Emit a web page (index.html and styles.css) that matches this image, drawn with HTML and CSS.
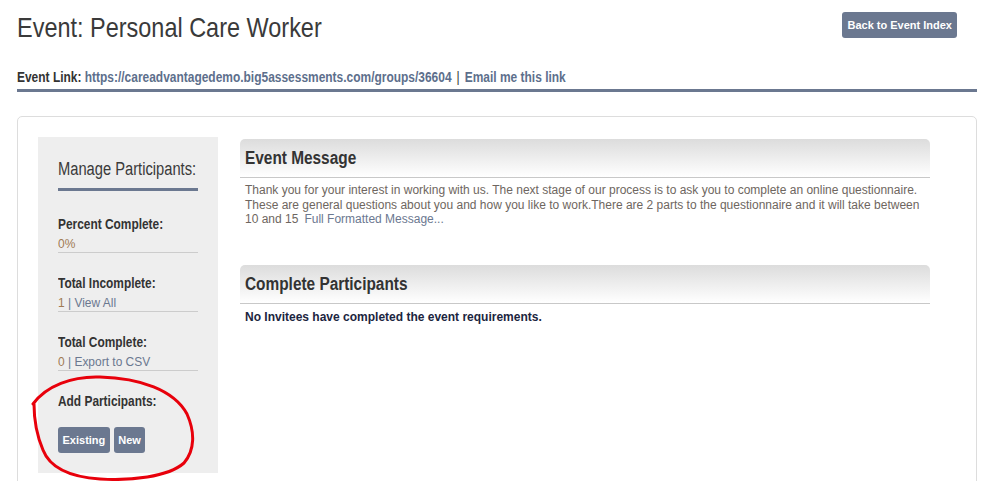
FILE: index.html
```html
<!DOCTYPE html>
<html>
<head>
<meta charset="utf-8">
<title>Event: Personal Care Worker</title>
<link rel="stylesheet" href="styles.css">
</head>
<body>
<div class="page">
  <header class="top">
    <h1 class="title"><span class="cond c-title">Event: Personal Care Worker</span></h1>
    <a class="btn btn-back" href="#">Back to Event Index</a>
  </header>
  <div class="event-link">
    <span class="cond c-link"><span class="label">Event Link:</span> <a href="#" class="lnk">https://careadvantagedemo.big5assessments.com/groups/36604</a> <span class="sep">|</span> <a href="#" class="lnk">Email me this link</a></span>
  </div>
  <div class="card">
    <aside class="side">
      <h2 class="side-title"><span class="cond c-side">Manage Participants:</span></h2>
      <div class="stat">
        <div class="stat-label"><span class="cond c-label">Percent Complete:</span></div>
        <div class="stat-val"><span class="cond c-val"><span class="num">0%</span></span></div>
      </div>
      <div class="stat">
        <div class="stat-label"><span class="cond c-label">Total Incomplete:</span></div>
        <div class="stat-val"><span class="cond c-val"><span class="num">1</span> | <a href="#">View All</a></span></div>
      </div>
      <div class="stat">
        <div class="stat-label"><span class="cond c-label">Total Complete:</span></div>
        <div class="stat-val"><span class="cond c-val"><span class="num">0</span> | <a href="#">Export to CSV</a></span></div>
      </div>
      <div class="add">
        <div class="stat-label"><span class="cond c-label">Add Participants:</span></div>
        <div class="add-btns">
          <a class="btn btn-sm" href="#">Existing</a>
          <a class="btn btn-sm" href="#">New</a>
        </div>
      </div>
    </aside>
    <main class="main">
      <section class="panel">
        <h3 class="panel-head"><span class="cond c-head">Event Message</span></h3>
        <p class="msg">Thank you for your interest in working with us. The next stage of our process is to ask you to complete an online questionnaire. These are general questions about you and how you like to work.There are 2 parts to the questionnaire and it will take between 10 and 15<a href="#" class="more">Full Formatted Message...</a></p>
      </section>
      <section class="panel">
        <h3 class="panel-head"><span class="cond c-head">Complete Participants</span></h3>
        <p class="none">No Invitees have completed the event requirements.</p>
      </section>
    </main>
  </div>
</div>
<svg class="annot" width="995" height="481" viewBox="0 0 995 481">
  <path d="M33 404 C 46 386, 72 376, 100 377 C 140 378, 174 390, 187 414 C 195 432, 195 450, 184 463 C 168 477, 130 481, 100 479 C 70 477, 50 468, 43 450 C 37 436, 34 420, 34 404" fill="none" stroke="#e8000b" stroke-width="3" stroke-linecap="round"/>
</svg>
</body>
</html>
```
FILE: styles.css
```css
* { box-sizing: border-box; }
html, body { margin: 0; padding: 0; background: #fff; }
body {
  font-family: "Liberation Sans", Arial, sans-serif;
  color: #333;
  overflow: hidden;
  height: 481px;
  position: relative;
}
a { text-decoration: none; }

.cond {
  display: inline-block;
  white-space: nowrap;
  transform-origin: 0 50%;
}
.c-title { transform: scaleX(0.838); }
.c-link { transform: scaleX(0.854); }
.c-side { transform: scaleX(0.817); }
.c-label { transform: scaleX(0.85); }
.c-val { transform: scaleX(0.92); }
.c-head { transform: scaleX(0.855); }

.page { padding: 0 18px 0 17px; }

.top {
  display: flex;
  justify-content: space-between;
  align-items: flex-start;
  height: 60px;
}
.title {
  margin: 11px 0 0 0;
  font-weight: normal;
  font-size: 28px;
  line-height: 34px;
  color: #3a3a3a;
}
.btn {
  display: inline-block;
  background: #6b7890;
  color: #fff;
  font-weight: bold;
  font-size: 11px;
  border-radius: 3px;
  font-family: "Liberation Sans", Arial, sans-serif;
}
.btn-back {
  margin: 12px 20px 0 0;
  padding: 0 5px;
  height: 26px;
  line-height: 26px;
}

.event-link {
  font-weight: bold;
  font-size: 14px;
  line-height: 18px;
  padding-bottom: 3px;
  border-bottom: 3px solid #6b7890;
  margin-top: 8px;
}
.event-link .label { color: #333; }
.event-link .lnk { color: #5d6f8c; }
.event-link .sep { color: #333; margin: 0 2px; font-weight: normal; }

.card {
  margin-top: 24px;
  border: 1px solid #ddd;
  border-radius: 5px;
  padding: 20px 46px 20px 20px;
  display: flex;
  gap: 22px;
  height: 400px;
}
.side {
  width: 180px;
  flex: none;
  background: #eee;
  padding: 21px 20px 20px 20px;
  align-self: flex-start;
}
.side-title {
  margin: 0;
  font-weight: normal;
  font-size: 18px;
  line-height: 22px;
  color: #3a3a3a;
  padding-bottom: 8px;
  border-bottom: 3px solid #6b7890;
}
.stat {
  border-bottom: 1px solid #ccc;
  margin-top: 21px;
  padding-bottom: 1px;
}
.side-title + .stat { margin-top: 24px; }
.stat-label {
  font-weight: bold;
  font-size: 14px;
  line-height: 18px;
  color: #333;
}
.stat-val {
  margin-top: 3px;
  font-size: 13px;
  line-height: 15px;
  color: #6b7890;
}
.stat-val .num { color: #a07a52; }
.stat-val a { color: #6b7890; }
.add { margin-top: 21px; }
.add-btns { display: flex; gap: 4px; margin-top: 17px; }
.btn-sm { height: 26px; line-height: 26px; padding: 0 4.5px; }

.main { flex: 1; padding-top: 2px; }
.panel { margin-bottom: 38px; }
.panel-head {
  margin: 0;
  height: 39px;
  line-height: 38px;
  padding-left: 5px;
  font-weight: bold;
  font-size: 18px;
  color: #333;
  border-radius: 5px 5px 0 0;
  background: linear-gradient(#dcdcdc, #fff);
  border-bottom: 1px solid #c8c8c8;
}
.msg {
  margin: 5px 0 0 5px;
  font-size: 12px;
  line-height: 14.5px;
  color: #6e6660;
}
.msg .more { color: #6b7890; margin-left: 6px; }
.none {
  margin: 6px 0 0 5px;
  font-size: 12px;
  line-height: 15px;
  font-weight: bold;
  color: #1c2540;
}

.annot {
  position: absolute;
  left: 0;
  top: 0;
  pointer-events: none;
}
```
